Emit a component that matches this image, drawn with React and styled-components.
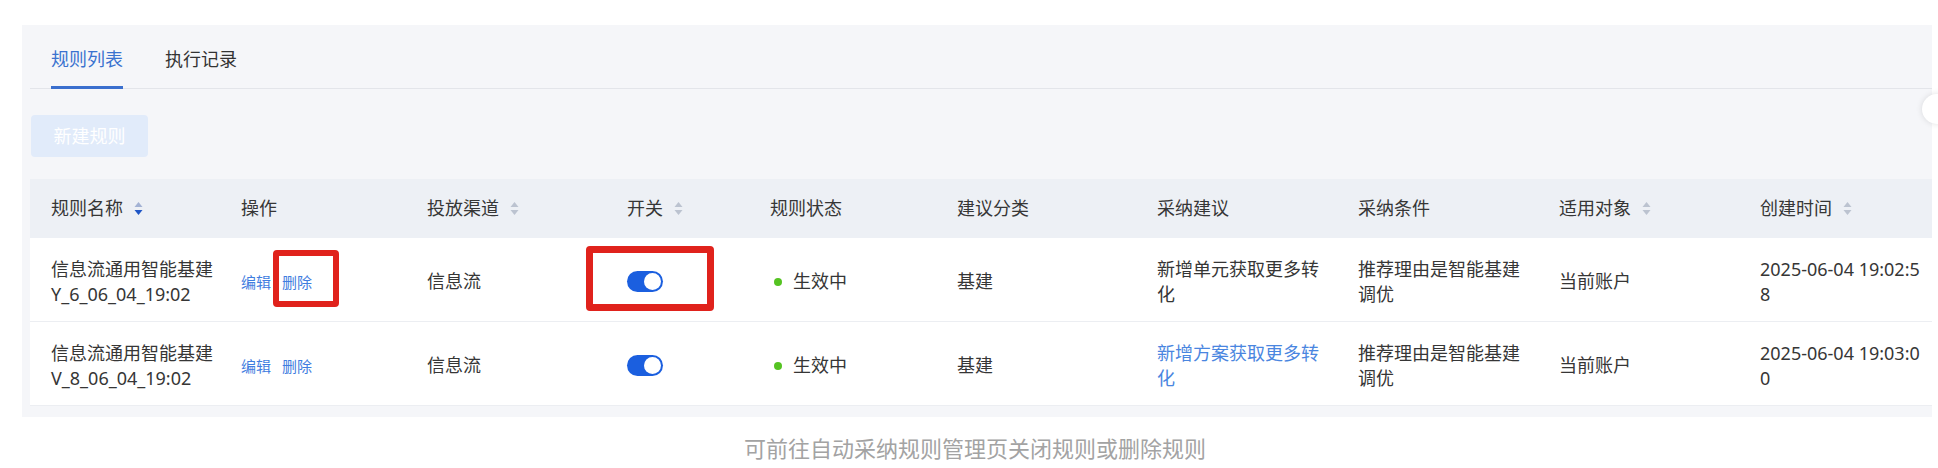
import React from "react";
import styled, { createGlobalStyle } from "styled-components";

const GlobalStyle = createGlobalStyle`
  html, body { margin: 0; padding: 0; background: #ffffff; }
  body {
    font-family: "Noto Sans", "Noto Sans CJK SC", sans-serif;
    color: #333333;
  }
  * { box-sizing: border-box; }
`;

const COLS = "190px 186px 200px 143px 187px 200px 201px 201px 201px 206px";

const Page = styled.div`
  position: relative;
  width: 1938px;
  height: 468px;
  overflow: hidden;
  padding-top: 25px;
`;

const Panel = styled.section`
  margin: 0 6px 0 22px;
  padding: 0 0 11px 8px;
  background: #f5f6f9;
  overflow: hidden;
`;

const TabBar = styled.div`
  display: flex;
  gap: 42px;
  padding-left: 21px;
  border-bottom: 1px solid #e3e5ea;
`;

const Tab = styled.div`
  padding: 22px 0 15px;
  line-height: 24px;
  font-size: 18px;
  color: ${(p) => (p.$active ? "#3a72cf" : "#333333")};
  border-bottom: 3px solid ${(p) => (p.$active ? "#3a6fce" : "transparent")};
  margin-bottom: -1px;
`;

const Toolbar = styled.div`
  display: flex;
  padding: 26px 0 22px 1px;
`;

const PrimaryButton = styled.button`
  width: 117px;
  height: 42px;
  border: none;
  border-radius: 4px;
  background: #e1ebfa;
  color: #ffffff;
  font-family: inherit;
  font-size: 18px;
  line-height: 24px;
  padding: 0;
`;

const Table = styled.div`
  display: flex;
  flex-direction: column;
`;

const HeaderRow = styled.div`
  display: grid;
  grid-template-columns: ${COLS};
  height: 59px;
  background: #edf0f5;
  align-items: center;
`;

const Row = styled.div`
  display: grid;
  grid-template-columns: ${COLS};
  height: 84px;
  padding-top: 4px;
  background: #ffffff;
  border-bottom: 1px solid #eceef2;
  align-items: center;
`;

const HeadCell = styled.div`
  display: flex;
  align-items: center;
  gap: 11px;
  padding: 0 4px 0 21px;
  font-size: 18px;
  line-height: 25px;
  color: #363636;
  white-space: nowrap;
`;

const Cell = styled.div`
  padding: 0 4px 0 21px;
  font-size: 18px;
  line-height: 25px;
  color: ${(p) => (p.$link ? "#4a86e0" : "#363636")};
`;

const DateText = styled.div`
  width: 165px;
  word-break: break-all;
`;

const Ops = styled.div`
  display: flex;
  gap: 11px;
  padding: 0 4px 0 21px;
  font-size: 15px;
  line-height: 24px;
  color: #3f7de0;
`;

const OpLink = styled.span`
  position: relative;
  cursor: pointer;
`;

const Mark = styled.span`
  position: absolute;
  top: ${(p) => p.$t}px;
  right: ${(p) => p.$r}px;
  bottom: ${(p) => p.$b}px;
  left: ${(p) => p.$l}px;
  border: ${(p) => p.$w}px solid #e0221c;
  border-radius: 4px;
  pointer-events: none;
`;

const SwitchCell = styled.div`
  display: flex;
  padding-left: 21px;
`;

const SwitchWrap = styled.span`
  position: relative;
  display: inline-flex;
`;

const Switch = styled.span`
  display: inline-flex;
  justify-content: flex-end;
  align-items: center;
  width: 36px;
  height: 21px;
  padding: 2px;
  border-radius: 11px;
  background: #1b5fdf;
`;

const Knob = styled.span`
  width: 17px;
  height: 17px;
  border-radius: 50%;
  background: #ffffff;
`;

const Status = styled.div`
  display: flex;
  align-items: center;
  gap: 11px;
  padding-left: 25px;
  font-size: 18px;
  line-height: 25px;
  color: #363636;
`;

const Dot = styled.span`
  width: 8px;
  height: 8px;
  border-radius: 50%;
  background: #55c322;
`;

const Caption = styled.p`
  margin: 16px 0 0;
  padding-left: 12px;
  text-align: center;
  font-size: 22px;
  line-height: 30px;
  color: #a3a3a3;
`;

const FloatCircle = styled.div`
  position: absolute;
  left: 1922px;
  top: 94px;
  width: 30px;
  height: 30px;
  border-radius: 50%;
  background: #ffffff;
  box-shadow: 0 0 6px rgba(0, 0, 0, 0.12);
`;

const SortIcon = ({ active }) => (
  <svg width="9" height="15" viewBox="0 0 9 15">
    <path d="M4.5 1 L8.5 6 L0.5 6 Z" fill={active ? "#a3b2d4" : "#bcc3d0"} />
    <path d="M0.5 9 L8.5 9 L4.5 14 Z" fill={active ? "#1f56c6" : "#bcc3d0"} />
  </svg>
);

const headers = [
  { label: "规则名称", sort: true, active: true },
  { label: "操作" },
  { label: "投放渠道", sort: true },
  { label: "开关", sort: true },
  { label: "规则状态" },
  { label: "建议分类" },
  { label: "采纳建议" },
  { label: "采纳条件" },
  { label: "适用对象", sort: true },
  { label: "创建时间", sort: true },
];

const rows = [
  {
    name: "信息流通用智能基建Y_6_06_04_19:02",
    suggestion: "新增单元获取更多转化",
    suggestionLink: false,
    time: "2025-06-04 19:02:58",
    marked: true,
  },
  {
    name: "信息流通用智能基建V_8_06_04_19:02",
    suggestion: "新增方案获取更多转化",
    suggestionLink: true,
    time: "2025-06-04 19:03:00",
    marked: false,
  },
];

export default function App() {
  return (
    <>
      <GlobalStyle />
      <Page>
        <Panel>
          <TabBar>
            <Tab $active>规则列表</Tab>
            <Tab>执行记录</Tab>
          </TabBar>
          <Toolbar>
            <PrimaryButton>新建规则</PrimaryButton>
          </Toolbar>
          <Table>
            <HeaderRow>
              {headers.map((h) => (
                <HeadCell key={h.label}>
                  {h.label}
                  {h.sort && <SortIcon active={h.active} />}
                </HeadCell>
              ))}
            </HeaderRow>
            {rows.map((r) => (
              <Row key={r.name}>
                <Cell>{r.name}</Cell>
                <Ops>
                  <OpLink>编辑</OpLink>
                  <OpLink>
                    删除
                    {r.marked && <Mark $t={-20} $r={-27} $b={-13} $l={-9} $w={6} />}
                  </OpLink>
                </Ops>
                <Cell>信息流</Cell>
                <SwitchCell>
                  <SwitchWrap>
                    <Switch>
                      <Knob />
                    </Switch>
                    {r.marked && <Mark $t={-25} $r={-51} $b={-19} $l={-41} $w={7} />}
                  </SwitchWrap>
                </SwitchCell>
                <Status>
                  <Dot />
                  生效中
                </Status>
                <Cell>基建</Cell>
                <Cell $link={r.suggestionLink}>{r.suggestion}</Cell>
                <Cell>推荐理由是智能基建调优</Cell>
                <Cell>当前账户</Cell>
                <Cell>
                  <DateText>{r.time}</DateText>
                </Cell>
              </Row>
            ))}
          </Table>
        </Panel>
        <Caption>可前往自动采纳规则管理页关闭规则或删除规则</Caption>
        <FloatCircle />
      </Page>
    </>
  );
}
